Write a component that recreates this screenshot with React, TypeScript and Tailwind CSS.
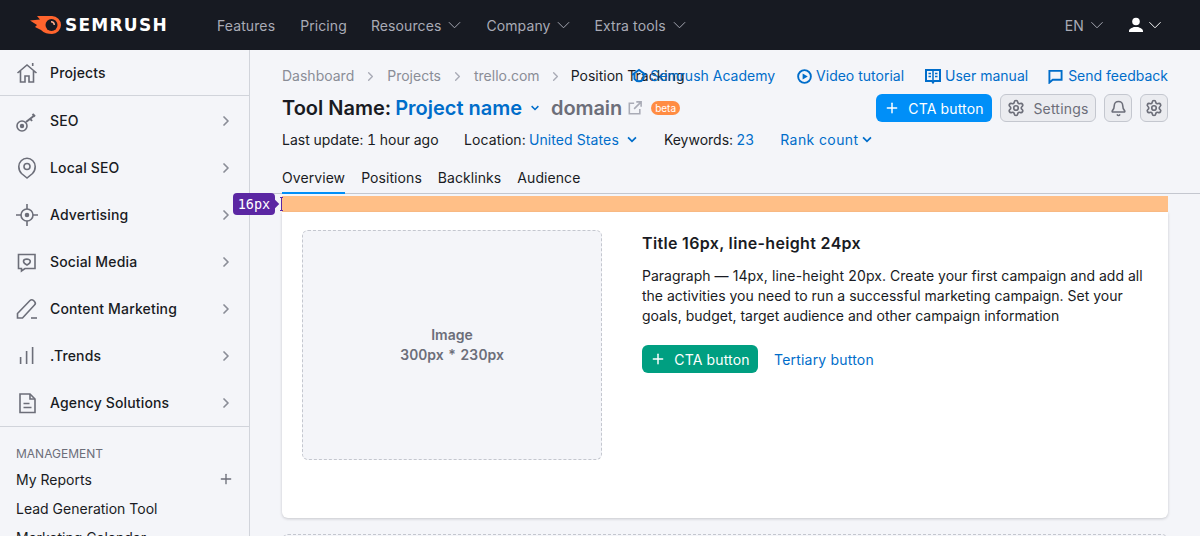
import { ChevronRight, Plus, Settings, Bell } from "lucide-react";
import type { ReactNode } from "react";

const Caret = ({ className }: { className?: string }) => (
  <svg viewBox="0 0 16 10" fill="none" stroke="currentColor" strokeWidth="1.2" className={className}>
    <path d="M1 1.5l7 7 7-7" />
  </svg>
);

const BlueCaret = ({ className }: { className?: string }) => (
  <svg viewBox="0 0 12 8" fill="none" stroke="currentColor" strokeWidth="2" className={className}>
    <path d="M1.5 1.5L6 6l4.5-4.5" />
  </svg>
);

const Icon = ({ children }: { children: ReactNode }) => (
  <svg viewBox="0 0 24 24" fill="none" stroke="#6c6e79" strokeWidth="1.6" className="-ml-[1px] mr-[1px] h-6 w-6 shrink-0">
    {children}
  </svg>
);

const sideItems: { label: string; icon: ReactNode }[] = [
  {
    label: "SEO",
    icon: (
      <>
        <circle cx="7" cy="17" r="5" />
        <circle cx="7" cy="17" r="1.4" fill="#6c6e79" />
        <path d="M11 13l9-7M15 9.5l2 2.5M17.5 5l2.5 2.5" strokeWidth="2" />
      </>
    ),
  },
  {
    label: "Local SEO",
    icon: (
      <>
        <path d="M12 22l-5.500-4.500C4.500 15.500 3.800 13.500 3.800 10.500a8.200 8.200 0 0116.400 0c0 3-.7 5-2.700 7z" />
        <circle cx="12" cy="10.500" r="3" />
      </>
    ),
  },
  {
    label: "Advertising",
    icon: (
      <>
        <circle cx="12" cy="12" r="6" />
        <circle cx="12" cy="12" r="1.500" fill="#6c6e79" />
        <path d="M12 1v5M12 18v5M1 12h5M18 12h5" />
      </>
    ),
  },
  {
    label: "Social Media",
    icon: (
      <>
        <path d="M3.500 4.500h16.500v14H10L6.500 21v-2.500h-3z" />
        <path d="M12 15c-2-1-3.500-2.200-3.500-3.800 0-2.800 6.800-2.800 6.800 0 0 1.600-1.300 2.800-3.300 3.800z" />
      </>
    ),
  },
  {
    label: "Content Marketing",
    icon: (
      <>
        <path d="M2.500 21v-4.500L15 3.500c1-1 2.500-1 3.500 0l1 1c1 1 1 2.500 0 3.500L7.500 21z" />
        <path d="M16 21h6" />
      </>
    ),
  },
  {
    label: ".Trends",
    icon: <path d="M5.600 20v-7M11.600 20V7M17.600 20V3" />,
  },
  {
    label: "Agency Solutions",
    icon: (
      <>
        <path d="M5 3h10l5 5v13.500H5z" />
        <path d="M15 3v5h5M8.500 12.500h6M8.500 16.500h8" />
      </>
    ),
  },
];

const Sidebar = () => (
  <aside className="flex w-[250px] shrink-0 flex-col border-r border-[#d1d4db] text-[14px] text-[#191b23]">
    <div className="flex h-[46px] shrink-0 items-center gap-[10px] border-b border-[#d1d4db] pl-[16px]">
      <Icon>
        <path d="M2.500 12L12 4l9.500 8M5.500 10v11H10v-6h4v6h4.500V10M17.700 2v3" />
      </Icon>
      <span className="font-medium tracking-[0.15px]">Projects</span>
    </div>
    <div className="flex shrink-0 flex-col border-b border-[#d1d4db] pt-[1px]">
      {sideItems.map((item) => (
        <div key={item.label} className="flex h-[47px] items-center gap-[10px] pl-[16px] pr-[15px]">
          <Icon>{item.icon}</Icon>
          <span className="flex-1 font-medium tracking-[0.15px]">{item.label}</span>
          <ChevronRight size={16} strokeWidth={2.6} className="text-[#8a8d97]" />
        </div>
      ))}
    </div>
    <div className="shrink-0 pl-[16px] pr-[15px] pt-[18px]">
      <div className="text-[12px] leading-[18px] text-[#6c6e79]">MANAGEMENT</div>
      <div className="mt-[6px] flex h-[20px] items-center justify-between">
        <span>My Reports</span>
        <Plus size={16} className="text-[#6c6e79]" />
      </div>
      <div className="mt-[10px] leading-[20px]">Lead Generation Tool</div>
      <div className="mt-[9px] leading-[20px]">Marketing Calendar</div>
    </div>
  </aside>
);

const Header = () => (
  <header className="flex h-[50px] shrink-0 items-center bg-[#171a22] pl-[30px] pr-[38px] text-[14px] tracking-[0.1px] text-[#a9abb6]">
    <svg viewBox="0 0 31 18" className="h-[18px] w-[31px] shrink-0">
      <path d="M22 0H7l3 3.500L0 4.500 7 9l-2 2 6 3c3 3 7 4 11 4a9 9 0 000-18z" fill="#ff642d" />
      <circle cx="21.500" cy="9" r="6" fill="#171a22" />
      <path d="M21 5a4 4 0 014 4h-1.500a2.500 2.500 0 00-2.500-2.500z" fill="#ffb08f" />
    </svg>
    <span className="ml-[4px] w-[103px] whitespace-nowrap font-['DejaVu_Sans',sans-serif] text-[17px] font-bold leading-none tracking-[1.25px] text-white">SEMRUSH</span>
    <nav className="ml-[49px] flex items-center gap-[24px]">
      <span className="mr-[1px]">Features</span>
      <span>Pricing</span>
      <span className="flex items-center gap-[6px]">Resources <Caret className="h-[8px] w-[15px]" /></span>
      <span className="flex items-center gap-[5px]">Company <Caret className="h-[8px] w-[15px]" /></span>
      <span className="flex items-center gap-[6px]">Extra tools <Caret className="h-[8px] w-[15px]" /></span>
    </nav>
    <div className="ml-auto flex items-center">
      <span className="flex items-center gap-[6px]">EN <Caret className="h-[8px] w-[14px]" /></span>
      <svg viewBox="0 0 16 16" fill="#fff" className="ml-[24px] h-[16px] w-[16px]">
        <circle cx="8" cy="4.500" r="3.800" />
        <path d="M1 14c0-2.500 3-3 5-4h4c2 1 5 1.500 5 4v1H1z" />
      </svg>
      <Caret className="ml-[4px] h-[8px] w-[14px] text-white" />
    </div>
  </header>
);

const Crumb = ({ children }: { children: ReactNode }) => (
  <>
    <span>{children}</span>
    <ChevronRight size={15} strokeWidth={2.2} className="text-[#a9abb6]" />
  </>
);

const TopLinks = () => (
  <div className="absolute right-0 top-[16px] flex items-center text-[14px] leading-[20px] text-[#006dca]">
    <span className="mr-[22px] flex items-center gap-[3px]">
      <svg viewBox="0 0 16 16" fill="none" stroke="currentColor" strokeWidth="2" className="h-[16px] w-[16px]">
        <path d="M1 7l7-5 7 5M3.500 6v5c2 3 7 3 9 0V6" />
      </svg>
      Semrush Academy
    </span>
    <span className="mr-[21px] flex items-center gap-[4px]">
      <svg viewBox="0 0 16 16" className="h-[15px] w-[15px]">
        <circle cx="8" cy="8" r="6.800" fill="none" stroke="currentColor" strokeWidth="2" />
        <path d="M6 4.800L11.500 8 6 11.200z" fill="currentColor" />
      </svg>
      Video tutorial
    </span>
    <span className="mr-[20px] flex items-center gap-[4px]">
      <svg viewBox="0 0 16 16" fill="none" stroke="currentColor" className="h-[16px] w-[16px]">
        <path d="M1 2h14v11H9l-1 1.500L7 13H1z" strokeWidth="2" />
        <path d="M8 2v11M3.500 5.500h2.500M3.500 8.500h2.500M10 5.500h2.500M10 8.500h2.500" strokeWidth="1.500" />
      </svg>
      User manual
    </span>
    <span className="flex items-center gap-[5px]">
      <svg viewBox="0 0 16 16" fill="none" stroke="currentColor" strokeWidth="2" className="h-[15px] w-[15px]">
        <path d="M1.500 2h13v9.500H5L1.500 14.500z" />
      </svg>
      Send feedback
    </span>
  </div>
);

const PageHead = () => (
  <div className="relative px-[32px] pt-[16px]">
    <div className="relative">
      <div className="flex items-center gap-[9px] text-[14px] leading-[20px] text-[#8a8d97]">
        <Crumb>Dashboard</Crumb>
        <Crumb>Projects</Crumb>
        <span>trello.com</span>
        <ChevronRight size={15} strokeWidth={2.2} className="-mx-[1px] text-[#a9abb6]" />
        <span className="text-[#191b23]">Position Tracking</span>
      </div>
      <div className="absolute right-0 top-[-16px] h-0 w-full">
        <TopLinks />
      </div>
    </div>
    <div className="mt-[7px] flex h-[30px] items-center">
      <span className="text-[20px] font-semibold text-[#191b23]">Tool Name:</span>
      <span className="ml-[4px] text-[20px] font-semibold text-[#006dca]">Project name</span>
      <BlueCaret className="ml-[8px] h-[6px] w-[10px] text-[#006dca]" />
      <span className="ml-[11px] text-[20px] font-semibold tracking-[-0.1px] text-[#6c6e79]">domain</span>
      <svg viewBox="0 0 16 16" fill="none" stroke="#a9abb6" strokeWidth="1.800" className="ml-[6px] h-[14px] w-[14px]">
        <path d="M7 2.500H1.500v12h12V9M9.500 1h5.500v5.500M15 1L7 9" />
      </svg>
      <span className="ml-[9px] flex h-[14px] items-center rounded-full bg-[#ff8c43] px-[4px] text-[10px] leading-none text-white">beta</span>
      <div className="ml-auto flex items-center gap-[8px]">
        <button className="flex h-[28px] w-[116px] items-center justify-center gap-[8px] rounded-[6px] bg-[#008ff8] text-[14px] tracking-[0.15px] text-white">
          <Plus size={16} strokeWidth={2.2} />
          CTA button
        </button>
        <button className="flex h-[28px] w-[96px] items-center justify-center gap-[8px] rounded-[6px] border border-[#c4c7cf] bg-[#ebecf0] text-[14px] tracking-[0.2px] text-[#6c6e79]">
          <Settings size={18} strokeWidth={2.2} className="text-[#6c6e79]" />
          Settings
        </button>
        <button className="flex h-[28px] w-[28px] items-center justify-center rounded-[6px] border border-[#c4c7cf] bg-[#ebecf0]">
          <Bell size={17} strokeWidth={2.2} className="text-[#6c6e79]" />
        </button>
        <button className="flex h-[28px] w-[28px] items-center justify-center rounded-[6px] border border-[#c4c7cf] bg-[#ebecf0]">
          <Settings size={18} strokeWidth={2.2} className="text-[#6c6e79]" />
        </button>
      </div>
    </div>
    <div className="mt-[6px] flex h-[20px] items-center text-[14px] text-[#191b23]">
      <span className="w-[158px] tabular-nums">Last update: 1 hour ago</span>
      <span className="ml-[24px] tracking-[0.1px]">Location:</span>
      <span className="ml-[3px] tracking-[0.1px] text-[#006dca]">United States</span>
      <BlueCaret className="ml-[7px] h-[7px] w-[12px] text-[#006dca]" />
      <span className="ml-[26px]">Keywords:</span>
      <span className="ml-[3px] tabular-nums text-[#006dca]">23</span>
      <span className="ml-[26px] w-[79px] tracking-[0.4px] text-[#006dca]">Rank count</span>
      <BlueCaret className="ml-[2px] h-[7px] w-[12px] text-[#006dca]" />
    </div>
  </div>
);

const Tabs = () => (
  <div className="mt-[19px] flex h-[26px] shrink-0 gap-[16px] border-b border-[#c4c7cf] px-[32px] text-[14px] tracking-[0.07px] text-[#191b23]">
    <span className="h-[26px] border-b-2 border-[#008ff8] leading-[20px]">Overview</span>
    <span className="leading-[20px]">Positions</span>
    <span className="leading-[20px]">Backlinks</span>
    <span className="leading-[20px]">Audience</span>
  </div>
);

const Card = () => (
  <div className="relative mx-[32px] mt-[2px]">
    <div className="h-[16px] bg-[#ffbf87]" />
    <div className="flex h-[306px] gap-[40px] rounded-b-[6px] bg-white p-[20px] pt-[18px] shadow-[0_1px_3px_rgba(25,27,35,0.2)]">
      <div className="flex h-[230px] w-[300px] shrink-0 items-center justify-center rounded-[6px] border border-dashed border-[#c4c7cf] bg-[#f4f5f9] text-center text-[14px] font-semibold leading-[20px] tabular-nums text-[#6c6e79]">
        <div>
          Image
          <br />
          300px * 230px
        </div>
      </div>
      <div className="flex-1 text-[#191b23]">
        <h2 className="mt-[1px] text-[16px] font-semibold leading-[24px] tracking-[0.33px]">Title 16px, line-height 24px</h2>
        <p className="mt-[11px] text-[14px] leading-[20px]">
          Paragraph <span className="tracking-[0.12px]">— 14px, line-height 20px.</span> Create your first campaign and add all the activities you need to run a successful marketing campaign. Set your goals, budget, target audience and other campaign information
        </p>
        <div className="mt-[19px] flex items-center gap-[16px]">
          <button className="flex h-[28px] w-[116px] items-center justify-center gap-[8px] rounded-[6px] bg-[#009f81] text-[14px] tracking-[0.15px] text-white">
            <Plus size={16} strokeWidth={2.2} />
            CTA button
          </button>
          <span className="text-[14px] tracking-[0.2px] text-[#006dca]">Tertiary button</span>
        </div>
      </div>
    </div>
    <div className="absolute left-[-49px] top-[-3px] flex h-[22px] w-[42px] items-center justify-center rounded-[4px] bg-[#5b27a3] pt-[1px] font-['DejaVu_Sans_Mono',monospace] text-[13.5px] leading-none text-white">
      16px
      <span className="absolute right-[-3px] top-[8px] h-[6px] w-[6px] rotate-45 bg-[#5b27a3]" />
    </div>
    <div className="absolute left-[-2px] top-[1px] h-[14px] w-[3px] border-y border-[#5b27a3]">
      <div className="mx-auto h-full w-px bg-[#5b27a3]" />
    </div>
    <div className="mt-[16px] h-[40px] rounded-[6px] border border-dashed border-[#c4c7cf]" />
  </div>
);

export default function App() {
  return (
    <div className="flex h-[536px] w-[1200px] flex-col overflow-hidden bg-[#f4f5f9] font-['Inter',sans-serif]">
      <Header />
      <div className="flex min-h-0 flex-1">
        <Sidebar />
        <main className="min-w-0 flex-1">
          <PageHead />
          <Tabs />
          <Card />
        </main>
      </div>
    </div>
  );
}
